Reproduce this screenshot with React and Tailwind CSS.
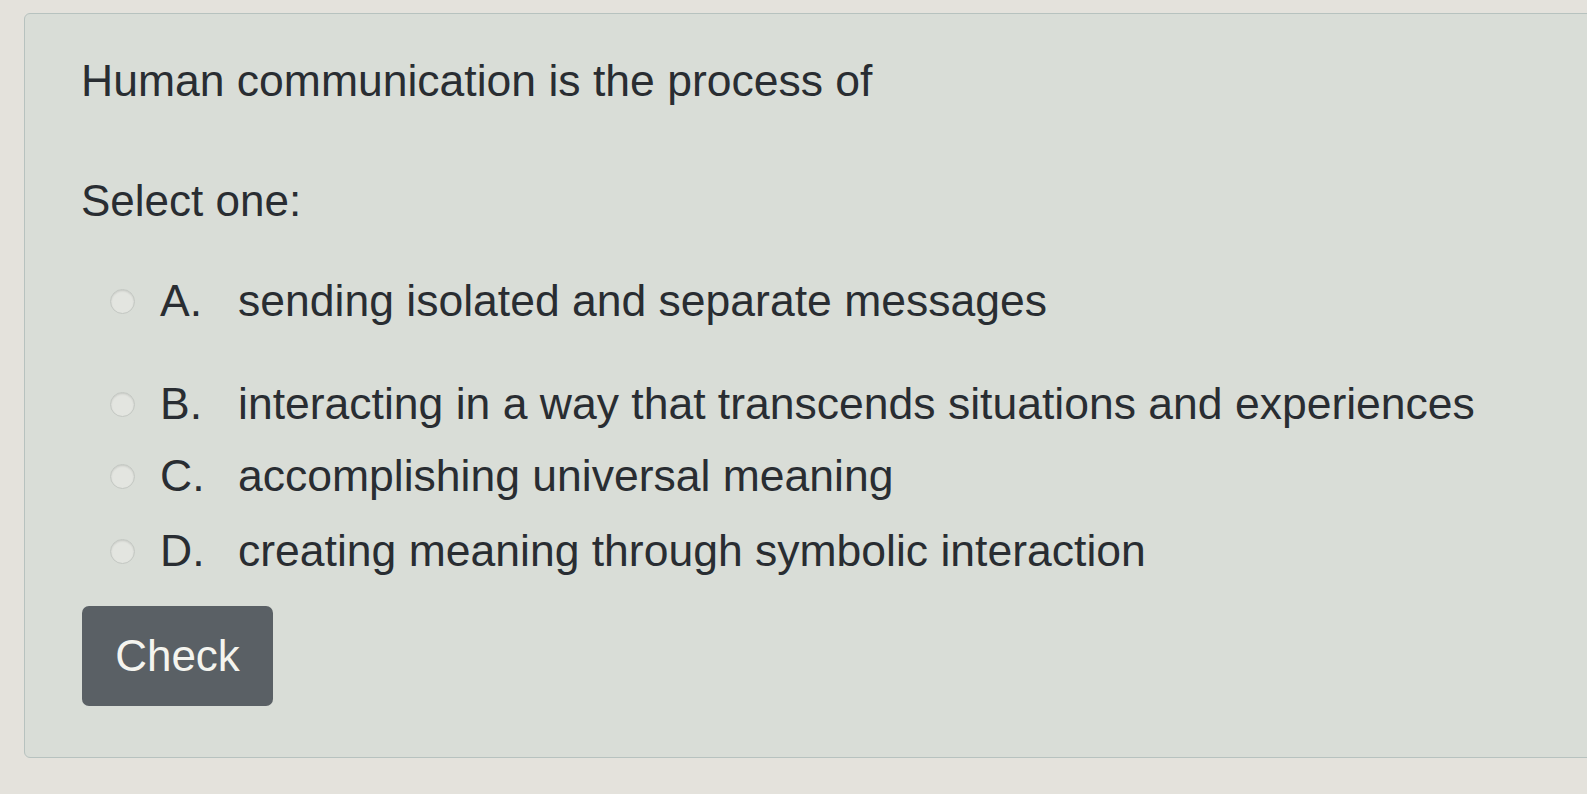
export default function App() {
  const options = [
    { id: "a", letter: "A.", text: "sending isolated and separate messages", gap: "mt-[48px]" },
    { id: "b", letter: "B.", text: "interacting in a way that transcends situations and experiences", gap: "mt-[51px]" },
    { id: "c", letter: "C.", text: "accomplishing universal meaning", gap: "mt-[20px]" },
    { id: "d", letter: "D.", text: "creating meaning through symbolic interaction", gap: "mt-[23px]" },
  ];

  return (
    <div className="w-[1587px] h-[794px] overflow-hidden bg-[#e4e2dc] pt-[13px] pl-[24px] font-['Liberation_Sans',Arial,sans-serif]">
      <div className="w-[1600px] h-[745px] bg-[#d9ddd7] border border-[#b7c2bf] rounded-[6px] pl-[56px] pt-[41px] text-[#292d32]">
        <p className="text-[44.5px] leading-[52px]">Human communication is the process of</p>
        <p className="mt-[68px] text-[44px] leading-[52px]">Select one:</p>

        <div>
          {options.map((o) => (
            <label key={o.id} className={`flex items-center ${o.gap}`}>
              <span className="ml-[29px] w-[25px] h-[25px] shrink-0 rounded-full border border-[#c3c7c2] bg-[#e3e5e0] shadow-[inset_0_1px_2px_rgba(0,0,0,0.12)]" />
              <span className="ml-[25px] w-[78px] text-[44.5px] leading-[52px]">{o.letter}</span>
              <span className="text-[44.5px] leading-[52px] whitespace-nowrap">{o.text}</span>
            </label>
          ))}
        </div>

        <button className="mt-[29px] ml-[1px] w-[191px] h-[100px] rounded-[7px] bg-[#5a6065] text-[#f4f4ef] text-[44px] leading-[52px]">
          Check
        </button>
      </div>
    </div>
  );
}
